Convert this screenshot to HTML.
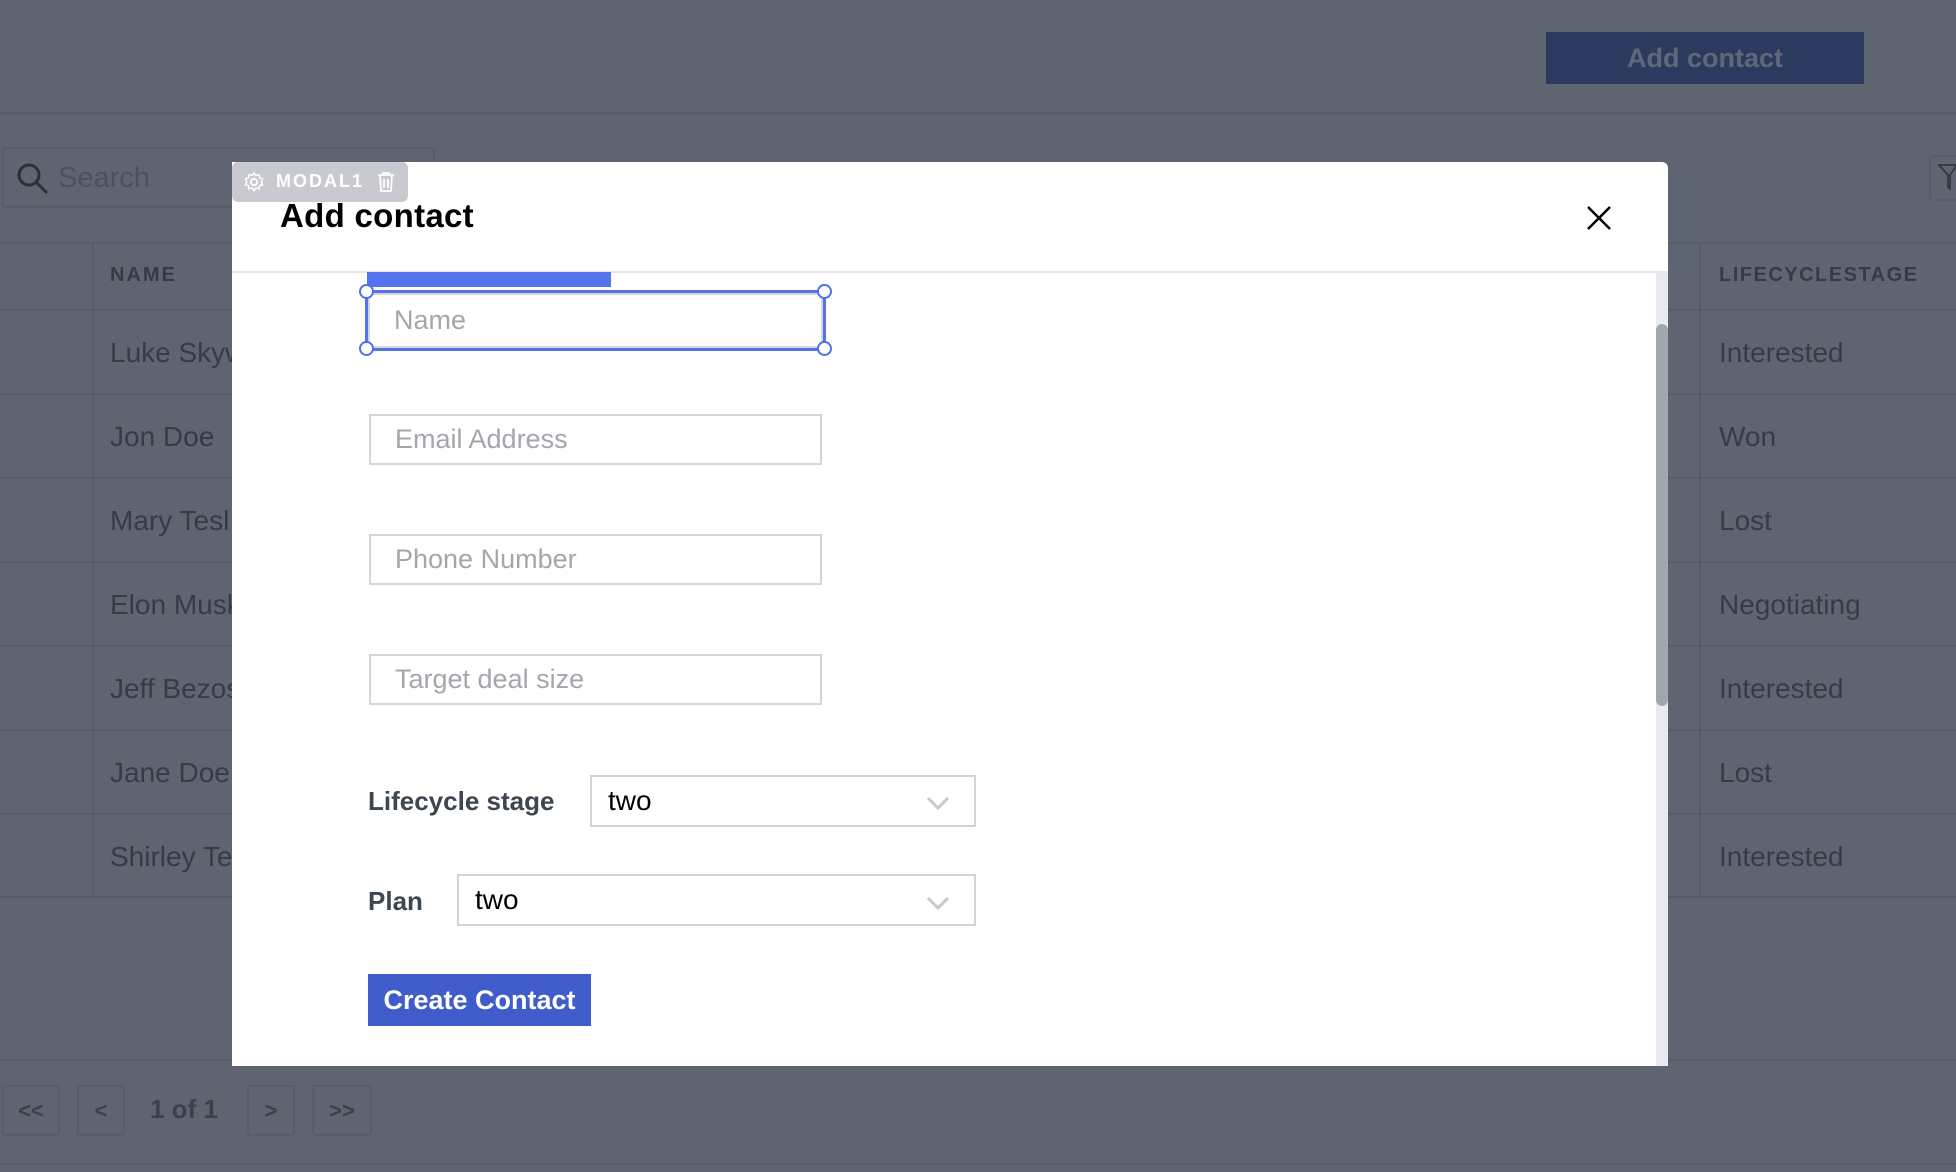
<!DOCTYPE html>
<html><head><meta charset="utf-8">
<style>
*{box-sizing:border-box;margin:0;padding:0}
body{width:1956px;height:1172px;background:#5f6570;font-family:"Liberation Sans",Arial,sans-serif;position:relative;overflow:hidden}
.a{position:absolute}
.hl{position:absolute;left:0;width:1956px;height:2px;background:#585e69}
.row{position:absolute;left:0;width:1956px;height:2px;background:#575d68}
.cell{position:absolute;font-size:28px;color:#353b47}
.pb{position:absolute;top:1085px;height:51px;border:2px solid #585e69;border-radius:3px;color:#3b414c;font-weight:bold;font-size:22px;text-align:center;line-height:47px}
.inp{position:absolute;left:369px;width:453px;height:51px;border:2px solid #d6d6d6;background:#fff;font-size:27px;color:#a3a6ab;padding-left:24px;line-height:47px}
.sel{position:absolute;height:52px;border:2px solid #d3d3d3;background:#fff;font-size:28px;color:#000;line-height:48px}
.lbl{position:absolute;left:368px;font-size:26px;color:#3e4650;font-weight:bold}
.h{position:absolute;width:15px;height:15px;border:2px solid #4f6ef0;border-radius:50%;background:#fff}
</style></head><body>
<div class="a" style="left:1546px;top:32px;width:318px;height:52px;background:#2c3a5f;color:#5f6878;font-size:27px;font-weight:bold;text-align:center;line-height:52px">Add contact</div>
<div class="hl" style="top:112px"></div>
<div class="a" style="left:2px;top:147px;width:433px;height:61px;border:2px solid #585e69;border-radius:3px"></div>
<svg class="a" style="left:16px;top:162px" width="34" height="34" viewBox="0 0 34 34"><circle cx="13" cy="13" r="10" fill="none" stroke="#2a303a" stroke-width="3"/><line x1="20" y1="20" x2="31" y2="31" stroke="#2a303a" stroke-width="3"/></svg>
<div class="a" style="left:58px;top:162px;font-size:29px;color:#4b515d">Search</div>
<div class="a" style="left:1929px;top:155px;width:40px;height:46px;border:2px solid #585e69;border-radius:4px"></div>
<svg class="a" style="left:1938px;top:163px" width="20" height="30"><path d="M1 2 L19 2 L12 12 L12 26 L10 24 L10 12 Z" fill="none" stroke="#2a303a" stroke-width="1.5"/></svg>
<div class="hl" style="top:242px"></div>
<div class="a" style="left:92px;top:243px;width:2px;height:654px;background:#575d68"></div>
<div class="a" style="left:1699px;top:243px;width:2px;height:654px;background:#575d68"></div>
<div class="a" style="left:110px;top:264px;font-size:20px;font-weight:bold;letter-spacing:2px;color:#353b47">NAME</div>
<div class="a" style="left:1719px;top:264px;font-size:20px;font-weight:bold;letter-spacing:1.5px;color:#353b47">LIFECYCLESTAGE</div>
<div class="row" style="top:309px"></div><div class="row" style="top:393px"></div><div class="row" style="top:477px"></div><div class="row" style="top:561px"></div><div class="row" style="top:645px"></div><div class="row" style="top:729px"></div><div class="row" style="top:813px"></div><div class="row" style="top:896px"></div>
<div class="cell" style="left:110px;top:337px">Luke Skyw</div><div class="cell" style="left:1719px;top:337px">Interested</div>
<div class="cell" style="left:110px;top:421px">Jon Doe</div><div class="cell" style="left:1719px;top:421px">Won</div>
<div class="cell" style="left:110px;top:505px">Mary Tesl</div><div class="cell" style="left:1719px;top:505px">Lost</div>
<div class="cell" style="left:110px;top:589px">Elon Musk</div><div class="cell" style="left:1719px;top:589px">Negotiating</div>
<div class="cell" style="left:110px;top:673px">Jeff Bezos</div><div class="cell" style="left:1719px;top:673px">Interested</div>
<div class="cell" style="left:110px;top:757px">Jane Doe</div><div class="cell" style="left:1719px;top:757px">Lost</div>
<div class="cell" style="left:110px;top:841px">Shirley Te</div><div class="cell" style="left:1719px;top:841px">Interested</div>
<div class="hl" style="top:1059px"></div>
<div class="pb" style="left:2px;width:58px">&lt;&lt;</div>
<div class="pb" style="left:77px;width:48px">&lt;</div>
<div class="a" style="left:150px;top:1094px;font-size:26px;font-weight:bold;color:#3b414c">1 of 1</div>
<div class="pb" style="left:247px;width:48px">&gt;</div>
<div class="pb" style="left:312px;width:60px">&gt;&gt;</div>
<div class="hl" style="top:1163px"></div>

<div class="a" style="left:232px;top:162px;width:1436px;height:904px;background:#fff;border-radius:0 6px 0 0"></div>
<div class="a" style="left:232px;top:271px;width:1436px;height:2px;background:#e6e6e8"></div>
<div class="a" style="left:280px;top:197px;font-size:33px;font-weight:bold;color:#000;letter-spacing:0.3px">Add contact</div>
<svg class="a" style="left:1586px;top:205px" width="26" height="26"><path d="M2 2 L24 24 M24 2 L2 24" stroke="#000" stroke-width="2.5"/></svg>
<div class="a" style="left:232px;top:162px;width:176px;height:40px;background:#c8cacf;border-radius:6px"></div>
<svg class="a" style="left:243px;top:171px" width="22" height="22" viewBox="0 0 24 24"><circle cx="12" cy="12" r="3.5" fill="none" stroke="#fff" stroke-width="2"/><path d="M12 2l2 3 3.5-1 .5 3.5 3.5 1-1.5 3.5 1.5 3-3.5 1-.5 3.5-3.5-1-2 3-2-3-3.5 1-.5-3.5-3.5-1 1.5-3-1.5-3.5 3.5-1 .5-3.5 3.5 1z" fill="none" stroke="#fff" stroke-width="1.6"/></svg>
<div class="a" style="left:276px;top:171px;font-size:18px;font-weight:bold;color:#fff;letter-spacing:2px">MODAL1</div>
<svg class="a" style="left:376px;top:171px" width="20" height="22"><path d="M2 4h16M7 4V2h6v2M4 4l1 16h10l1-16M8 8v9M12 8v9" fill="none" stroke="#fff" stroke-width="1.8"/></svg>
<div class="a" style="left:1656px;top:273px;width:12px;height:793px;background:#e9eaee"></div>
<div class="a" style="left:1656px;top:324px;width:12px;height:382px;background:#a2a6ad;border-radius:6px"></div>
<div class="a" style="left:367px;top:272px;width:244px;height:15px;background:#5473ef"></div>
<div class="inp" style="top:293px;height:55px;outline:3px solid #5473ef;left:368px;width:455px;line-height:51px">Name</div>
<div class="h" style="left:359px;top:284px"></div><div class="h" style="left:817px;top:284px"></div>
<div class="h" style="left:359px;top:341px"></div><div class="h" style="left:817px;top:341px"></div>
<div class="inp" style="top:414px">Email Address</div>
<div class="inp" style="top:534px">Phone Number</div>
<div class="inp" style="top:654px">Target deal size</div>
<div class="lbl" style="top:786px">Lifecycle stage</div>
<div class="sel" style="left:590px;top:775px;width:386px;padding-left:16px">two</div>
<svg class="a" style="left:926px;top:795px" width="24" height="16"><path d="M2 3 L12 13 L22 3" fill="none" stroke="#c9c9c9" stroke-width="3"/></svg>
<div class="lbl" style="top:886px">Plan</div>
<div class="sel" style="left:457px;top:874px;width:519px;padding-left:16px">two</div>
<svg class="a" style="left:926px;top:895px" width="24" height="16"><path d="M2 3 L12 13 L22 3" fill="none" stroke="#c9c9c9" stroke-width="3"/></svg>
<div class="a" style="left:368px;top:974px;width:223px;height:52px;background:#405ccb;color:#fff;font-size:27px;font-weight:bold;text-align:center;line-height:52px">Create Contact</div>
</body></html>
